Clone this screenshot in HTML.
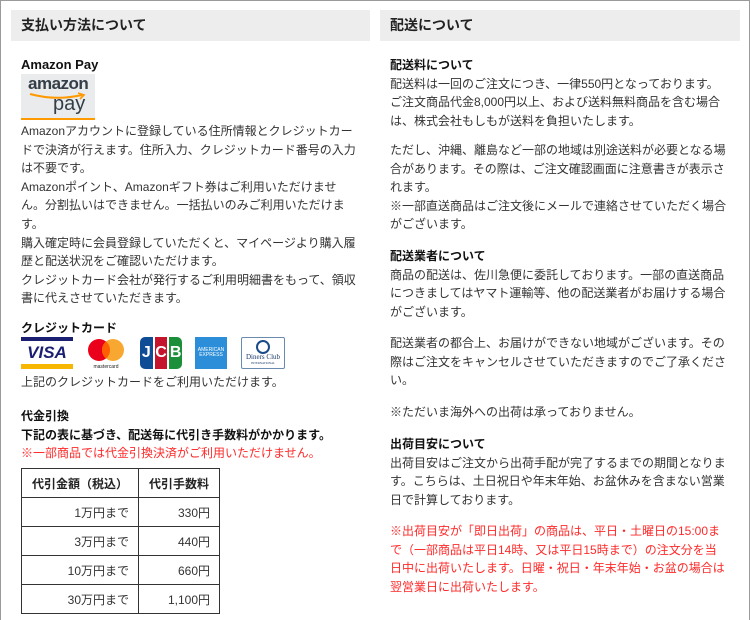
<!DOCTYPE html>
<html><head><meta charset="utf-8"><style>
*{margin:0;padding:0;box-sizing:border-box}
body{width:750px;height:620px;background:#fff;font-family:"Liberation Sans","Noto Sans CJK JP",sans-serif;font-size:12px;color:#333;position:relative;overflow:hidden}
.frame{position:absolute;left:0;top:0;width:750px;height:620px;border:1px solid #9a9a9a;border-bottom:none}
.hd{position:absolute;top:10px;height:31px;background:#ededed;font-size:14px;font-weight:bold;color:#222;line-height:31px;padding-left:10px}
.b{position:absolute;line-height:18.6px;white-space:nowrap}
.b b{color:#111}
.red{color:#ff2a2a}
table{position:absolute;left:21px;top:468px;border-collapse:collapse;width:199px}
td,th{border:1px solid #333;height:29px;padding:0 9px;font-size:12px;text-align:right;font-weight:normal}
th{text-align:center;font-weight:bold;color:#222}
</style></head><body>
<div class="frame"></div>
<div class="hd" style="left:11px;width:359px">支払い方法について</div>
<div class="hd" style="left:380px;width:360px">配送について</div>

<div class="b" style="left:21px;top:56px"><b style="font-size:13px">Amazon Pay</b></div>
<div style="position:absolute;left:21px;top:74px;width:74px;height:46px;background:#e9ebec;border-bottom:2px solid #f90">
<div style="position:absolute;left:7px;top:0px;font-size:17px;font-weight:bold;color:#333e48;letter-spacing:-0.5px">amazon</div>
<svg style="position:absolute;left:7px;top:18px" width="62" height="8"><path d="M2 2 Q28 9 54 3" stroke="#f90" stroke-width="2" fill="none"/><path d="M50 1 L56 3 L52 7" stroke="#f90" stroke-width="1.6" fill="none"/></svg>
<div style="position:absolute;left:32px;top:19px;font-size:20px;color:#333e48">pay</div>
</div>
<div class="b" style="left:21px;top:122px">Amazonアカウントに登録している住所情報とクレジットカー<br>ドで決済が行えます。住所入力、クレジットカード番号の入力<br>は不要です。<br>Amazonポイント、Amazonギフト券はご利用いただけませ<br>ん。分割払いはできません。一括払いのみご利用いただけま<br>す。<br>購入確定時に会員登録していただくと、マイページより購入履<br>歴と配送状況をご確認いただけます。<br>クレジットカード会社が発行するご利用明細書をもって、領収<br>書に代えさせていただきます。</div>

<div class="b" style="left:21px;top:319px"><b>クレジットカード</b></div>
<div style="position:absolute;left:21px;top:337px;width:52px;height:32px;background:#fff">
<div style="height:4px;background:#1a1f71"></div>
<div style="font:italic bold 17px 'Liberation Sans',sans-serif;color:#1a1f71;text-align:center;line-height:23px">VISA</div>
<div style="height:5px;background:#f7b600"></div></div>
<svg style="position:absolute;left:84px;top:337px" width="44" height="32"><circle cx="15" cy="13" r="11" fill="#eb001b"/><circle cx="29" cy="13" r="11" fill="#f79e1b" opacity=".9"/><path d="M22 4.5a11 11 0 0 1 0 17a11 11 0 0 1 0-17z" fill="#ff5f00"/><text x="22" y="31" font-size="5" text-anchor="middle" fill="#222" font-family="Liberation Sans">mastercard</text></svg>
<div style="position:absolute;left:140px;top:337px;width:42px;height:32px;display:flex;gap:2px">
<div style="flex:1;background:#0e4c96;border-radius:5px 0 0 5px;color:#fff;font-weight:bold;font-size:16px;text-align:center;line-height:32px">J</div>
<div style="flex:1;background:#c5152c;color:#fff;font-weight:bold;font-size:16px;text-align:center;line-height:32px">C</div>
<div style="flex:1;background:#1c8f3a;border-radius:0 5px 5px 0;color:#fff;font-weight:bold;font-size:16px;text-align:center;line-height:32px">B</div></div>
<div style="position:absolute;left:195px;top:337px;width:32px;height:32px;background:#2c8ed8;color:#fff;font-size:5px;text-align:center;padding-top:11px;line-height:5px">AMERICAN<br>EXPRESS</div>
<div style="position:absolute;left:241px;top:337px;width:44px;height:32px;border:1px solid #6a8ab0;border-radius:2px;text-align:center">
<div style="width:14px;height:14px;border:2px solid #1a4a8a;border-radius:50%;margin:2px auto 0"></div>
<div style="font:7px 'Liberation Serif',serif;color:#1a3a6a;line-height:7px">Diners Club</div>
<div style="font:3px 'Liberation Serif',serif;color:#1a3a6a">INTERNATIONAL</div></div>
<div class="b" style="left:21px;top:373px">上記のクレジットカードをご利用いただけます。</div>

<div class="b" style="left:21px;top:407px"><b>代金引換</b><br><b>下記の表に基づき、配送毎に代引き手数料がかかります。</b><br><span class="red">※一部商品では代金引換決済がご利用いただけません。</span></div>
<table>
<tr><th style="width:117px">代引金額（税込）</th><th>代引手数料</th></tr>
<tr><td>1万円まで</td><td>330円</td></tr>
<tr><td>3万円まで</td><td>440円</td></tr>
<tr><td>10万円まで</td><td>660円</td></tr>
<tr><td>30万円まで</td><td>1,100円</td></tr>
</table>

<div class="b" style="left:390px;top:56px"><b>配送料について</b><br>配送料は一回のご注文につき、一律550円となっております。<br>ご注文商品代金8,000円以上、および送料無料商品を含む場合<br>は、株式会社もしもが送料を負担いたします。</div>
<div class="b" style="left:390px;top:141px">ただし、沖縄、離島など一部の地域は別途送料が必要となる場<br>合があります。その際は、ご注文確認画面に注意書きが表示さ<br>れます。<br>※一部直送商品はご注文後にメールで連絡させていただく場合<br>がございます。</div>
<div class="b" style="left:390px;top:247px"><b>配送業者について</b><br>商品の配送は、佐川急便に委託しております。一部の直送商品<br>につきましてはヤマト運輸等、他の配送業者がお届けする場合<br>がございます。</div>
<div class="b" style="left:390px;top:334px">配送業者の都合上、お届けができない地域がございます。その<br>際はご注文をキャンセルさせていただきますのでご了承くださ<br>い。</div>
<div class="b" style="left:390px;top:403px">※ただいま海外への出荷は承っておりません。</div>
<div class="b" style="left:390px;top:435px"><b>出荷目安について</b><br>出荷目安はご注文から出荷手配が完了するまでの期間となりま<br>す。こちらは、土日祝日や年末年始、お盆休みを含まない営業<br>日で計算しております。</div>
<div class="b red" style="left:390px;top:522px">※出荷目安が「即日出荷」の商品は、平日・土曜日の15:00ま<br>で（一部商品は平日14時、又は平日15時まで）の注文分を当<br>日中に出荷いたします。日曜・祝日・年末年始・お盆の場合は<br>翌営業日に出荷いたします。</div>
</body></html>
